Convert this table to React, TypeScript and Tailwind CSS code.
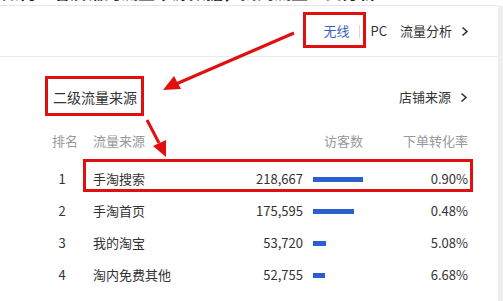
import React from "react";

const rows = [
  { rank: 1, name: "手淘搜索", uv: "218,667", bar: 50, rate: "0.90%" },
  { rank: 2, name: "手淘首页", uv: "175,595", bar: 41, rate: "0.48%" },
  { rank: 3, name: "我的淘宝", uv: "53,720", bar: 13, rate: "5.08%" },
  { rank: 4, name: "淘内免费其他", uv: "52,755", bar: 12, rate: "6.68%" },
];

function Chevron() {
  return (
    <svg width="8" height="11" viewBox="0 0 8 11" className="ml-[9px]">
      <path d="M1.5 1.5 L6 5.5 L1.5 9.5" fill="none" stroke="#333" strokeWidth="1.6" />
    </svg>
  );
}

export default function App() {
  return (
    <div
      className="relative w-[503px] h-[301px] overflow-hidden bg-white flex text-[#333]"
      style={{ fontFamily: '"Noto Sans CJK SC", "Noto Sans", sans-serif' }}
    >
      <div className="flex-1 flex flex-col">
        {/* cut-off top text */}
        <div className="h-[5px] overflow-hidden border-b border-[#e6e6e6] box-content">
          <div className="mt-[-19px] pl-[2px] text-[17px] leading-[22px] font-bold text-[#222] whitespace-nowrap">
            如何查看店铺的流量来源数据，找到流量入口分析
          </div>
        </div>
        {/* header */}
        <div className="h-[51px] border-b border-[#ebebeb] flex items-center justify-end pr-[29px] text-[13px]">
          <span className="text-[#3d5fc4]">无线</span>
          <span className="mx-[10px] w-px h-[13px] bg-[#d8d8d8]" />
          <span>PC</span>
          <span className="ml-[13px]">流量分析</span>
          <Chevron />
        </div>
        {/* section title */}
        <div className="pt-[28px] h-[52px] flex items-center justify-between pl-[53px] pr-[30px]">
          <span className="text-[14px] leading-[24px]">二级流量来源</span>
          <span className="flex items-center text-[13px] leading-[24px]">
            店铺来源
            <Chevron />
          </span>
        </div>
        {/* column header */}
        <div className="mt-[20px] h-[24px] flex items-center pl-[52px] pr-[30px] text-[13px] text-[#999] whitespace-nowrap">
          <span className="w-[41px]">排名</span>
          <span className="w-[228px]">流量来源</span>
          <span className="w-[42px] text-right">访客数</span>
          <span className="flex-1 text-right">下单转化率</span>
        </div>
        {/* rows */}
        <div className="mt-[10px] flex flex-col">
          {rows.map((r) => (
            <div key={r.rank} className="h-[32px] flex items-center pl-[50px] pr-[30px] text-[13px]">
              <span className="w-[24px] text-center mr-[19px]">{r.rank}</span>
              <span className="w-[210px] flex justify-between">
                <span>{r.name}</span>
                <span>{r.uv}</span>
              </span>
              <span className="ml-[10px] w-[60px] flex items-center">
                <span className="h-[5px] bg-[#2a5fcf]" style={{ width: r.bar }} />
              </span>
              <span className="flex-1 text-right">{r.rate}</span>
            </div>
          ))}
        </div>
      </div>
      <div className="w-[5px] bg-[#eeeeee] mt-[6px]" />

      {/* annotations */}
      <div className="absolute left-[303px] top-[12px] w-[63px] h-[36px] border-[3px] border-[#e01010]" />
      <div className="absolute left-[45px] top-[76px] w-[99px] h-[40px] border-[3px] border-[#e01010]" />
      <div className="absolute left-[83px] top-[159px] w-[390px] h-[33px] border-[3px] border-[#e01010]" />
      <svg className="absolute left-0 top-0 pointer-events-none" width="503" height="301">
        <line x1="294" y1="33" x2="176" y2="84" stroke="#e01010" strokeWidth="3" />
        <polygon points="163,90 174,76 181,89" fill="#e01010" />
        <line x1="147" y1="120" x2="159" y2="143" stroke="#e01010" strokeWidth="3" />
        <polygon points="166,157 153,146 166,140" fill="#e01010" />
      </svg>
    </div>
  );
}
